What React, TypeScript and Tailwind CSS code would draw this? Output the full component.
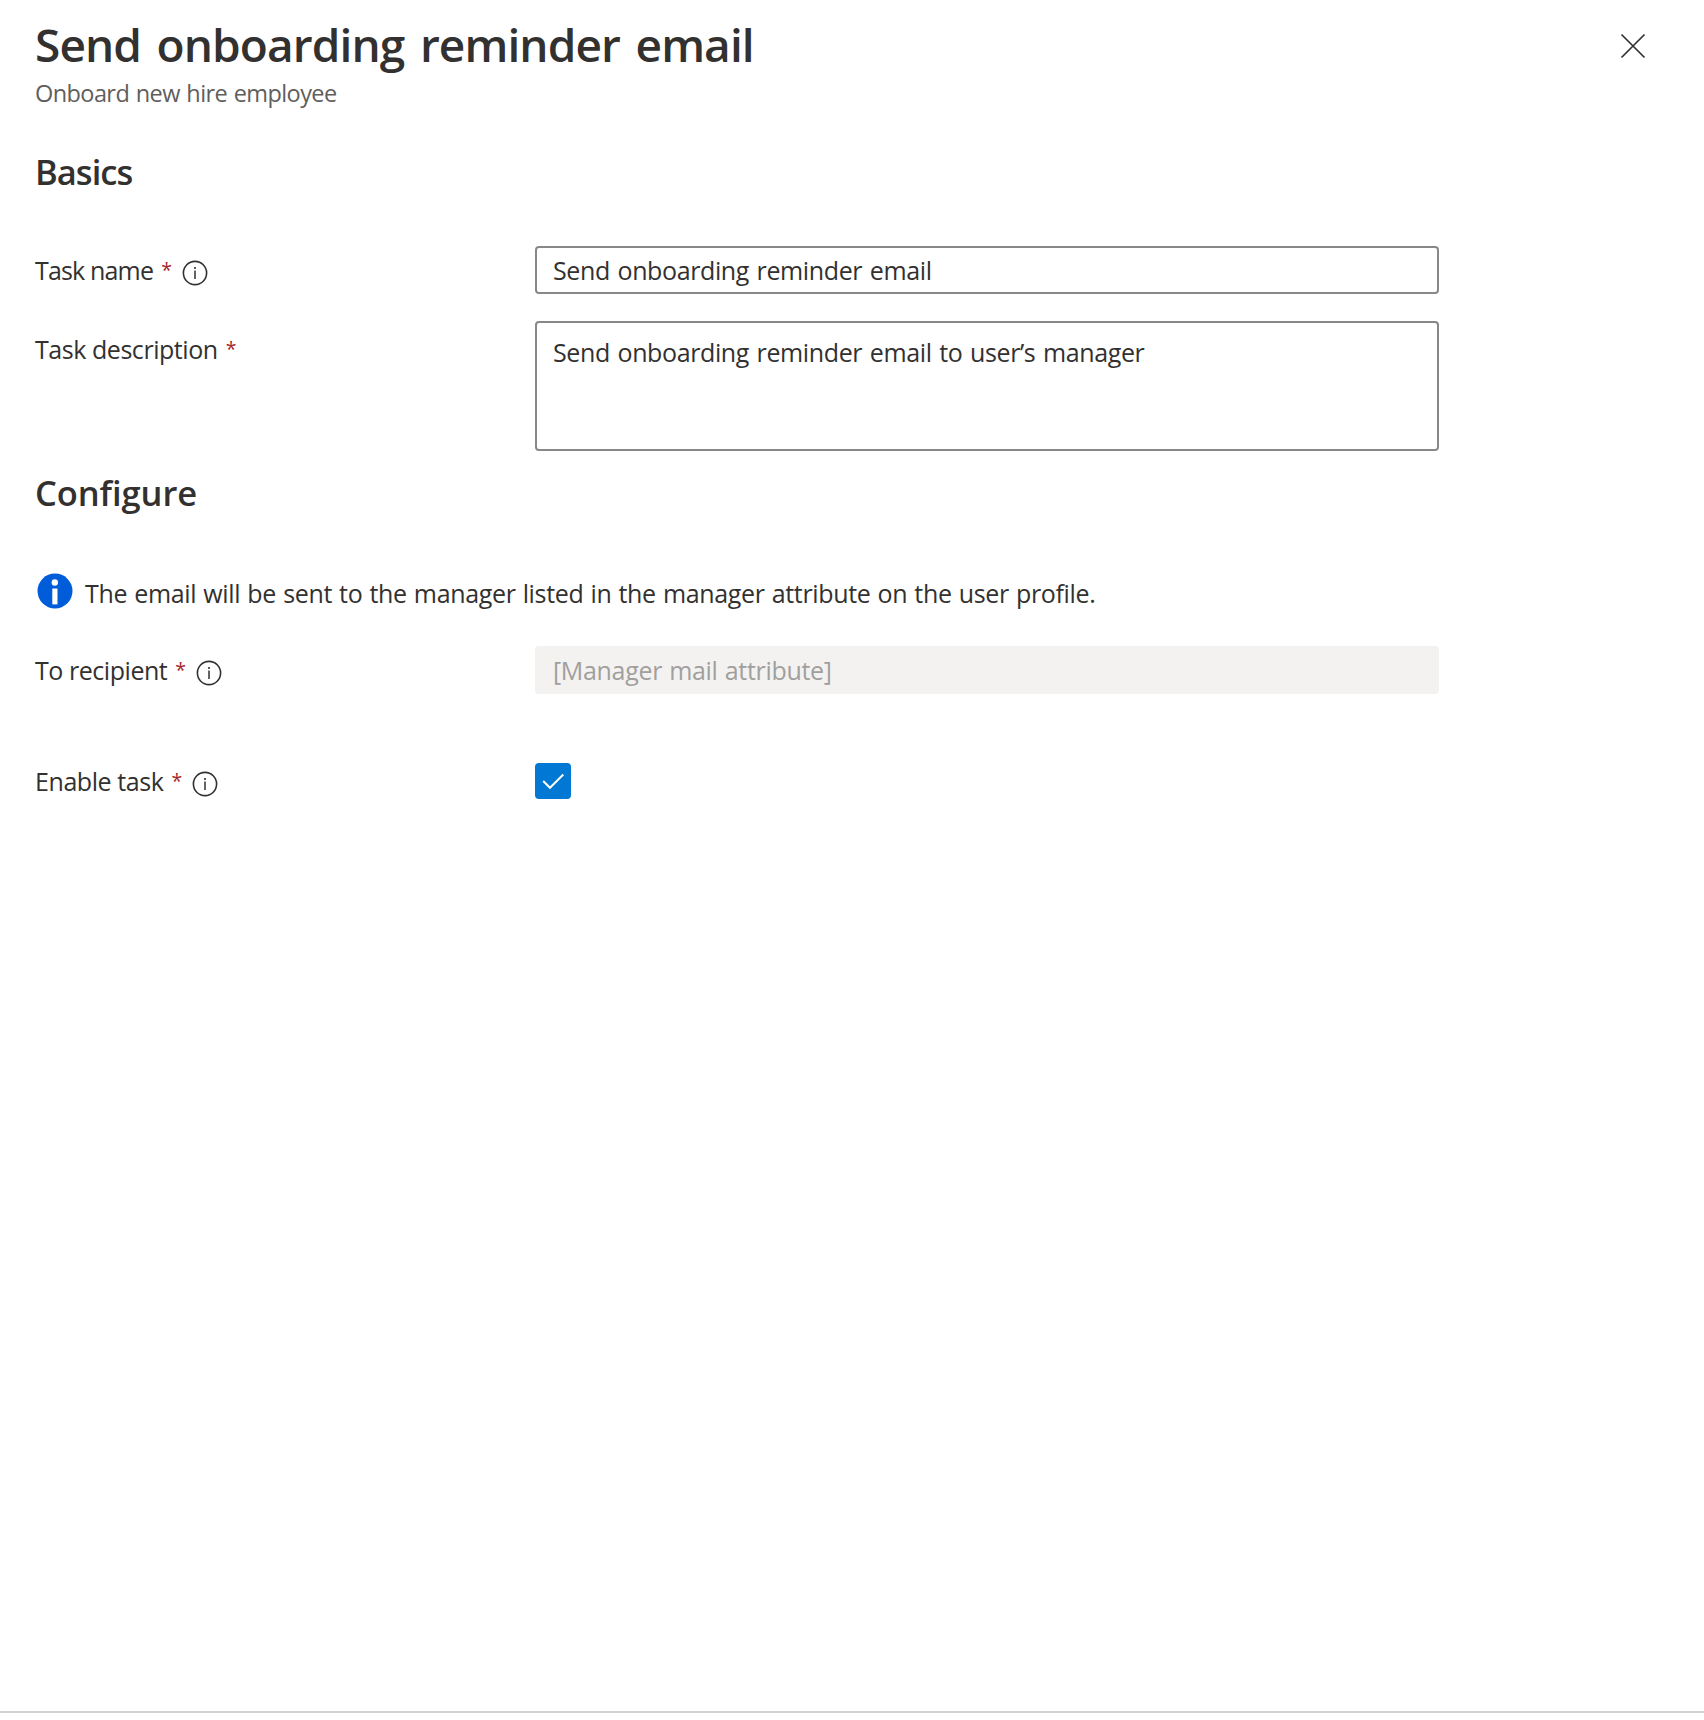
import type { ReactNode } from "react";

function InfoIcon() {
  return (
    <svg viewBox="0 0 26 26" className="mt-2 ml-[10px] size-[26px] shrink-0" fill="none">
      <circle cx="13" cy="13" r="11.6" stroke="#323130" strokeWidth="1.6" />
      <path d="M13 10.4v8.6" stroke="#323130" strokeWidth="1.5" />
      <circle cx="13" cy="8" r="1.1" fill="#323130" />
    </svg>
  );
}

function Label({ text, info, className }: { text: string; info?: boolean; className: string }) {
  return (
    <div className="flex w-[500px] shrink-0 items-start">
      <span className={`leading-9 whitespace-nowrap ${className}`}>{text}</span>
      <span className="ml-2 text-[19.5px] leading-9 text-[#a4262c]">*</span>
      {info && <InfoIcon />}
    </div>
  );
}

function Row({ children, className }: { children: ReactNode; className: string }) {
  return <div className={`flex items-start ${className}`}>{children}</div>;
}

export default function App() {
  return (
    <div className="flex h-[1720px] w-[1704px] flex-col bg-white font-['Open_Sans',sans-serif] text-[25px] text-[#323130]">
      <header className="flex items-start justify-between pt-4 pr-[58px] pl-[35px]">
        <div>
          <h1 className="text-[46px] leading-[56px] font-semibold tracking-[-0.9px] [word-spacing:4.5px]">
            Send onboarding reminder email
          </h1>
          <p className="mt-[5px] text-[23.5px] leading-8 tracking-[-0.58px] text-[#605e5c] [word-spacing:1px]">
            Onboard new hire employee
          </p>
        </div>
        <button type="button" aria-label="Close" className="mt-[17px]">
          <svg viewBox="0 0 26 26" className="size-[26px]" fill="none">
            <path d="M1.5 1.5l23 23M24.5 1.5l-23 23" stroke="#323130" strokeWidth="1.7" />
          </svg>
        </button>
      </header>

      <main className="flex flex-1 flex-col pl-[35px]">
        <h2 className="mt-[39px] text-[34.5px] leading-[48px] font-semibold tracking-[-0.95px]">Basics</h2>

        <Row className="mt-[50px]">
          <div className="pt-1.5">
            <Label text="Task name" info className="tracking-[-0.83px]" />
          </div>
          <input
            readOnly
            value="Send onboarding reminder email"
            className="h-12 w-[904px] rounded-[4px] border-2 border-[#8a8886] px-4 leading-[44px] tracking-[-0.38px] [word-spacing:1.5px]"
          />
        </Row>

        <Row className="mt-[27px]">
          <div className="pt-2.5">
            <Label text="Task description" className="tracking-[-0.45px]" />
          </div>
          <textarea
            readOnly
            value="Send onboarding reminder email to user’s manager"
            className="h-[130px] w-[904px] resize-none rounded-[4px] border-2 border-[#8a8886] px-4 pt-[11px] leading-9 tracking-[-0.38px] [word-spacing:1.5px]"
          />
        </Row>

        <h2 className="mt-[18px] text-[34.5px] leading-[48px] font-semibold tracking-[-0.08px]">Configure</h2>

        <Row className="mt-14">
          <svg viewBox="0 0 36 36" className="ml-[2px] size-9 shrink-0">
            <circle cx="18" cy="18" r="17.5" fill="#015cda" />
            <circle cx="17.8" cy="9.5" r="3.2" fill="#fff" />
            <path d="M15.3 15.5h5.2v15.9h-5.2z" fill="#fff" />
          </svg>
          <p className="ml-3 pt-0.5 leading-9 tracking-[-0.35px] whitespace-nowrap [word-spacing:1px]">
            The email will be sent to the manager listed in the manager attribute on the user profile.
          </p>
        </Row>

        <Row className="mt-[35px]">
          <div className="pt-1.5">
            <Label text="To recipient" info className="tracking-[-0.45px]" />
          </div>
          <input
            disabled
            value="[Manager mail attribute]"
            className="h-12 w-[904px] rounded-[4px] bg-[#f3f2f1] px-[18px] leading-[48px] tracking-[-0.32px] text-[#a19f9d] [word-spacing:1px]"
          />
        </Row>

        <Row className="mt-[69px]">
          <Label text="Enable task" info className="tracking-[-0.42px]" />
          <div role="checkbox" aria-checked="true" className="size-9 rounded-[4px] bg-[#0078d4]">
            <svg viewBox="0 0 36 36" className="size-9" fill="none">
              <path d="M8.2 18l6.8 6.8L28.3 11.5" stroke="#fff" strokeWidth="2" />
            </svg>
          </div>
        </Row>
      </main>

      <footer className="h-[9px] border-t-2 border-[#d2d2d2]" />
    </div>
  );
}
